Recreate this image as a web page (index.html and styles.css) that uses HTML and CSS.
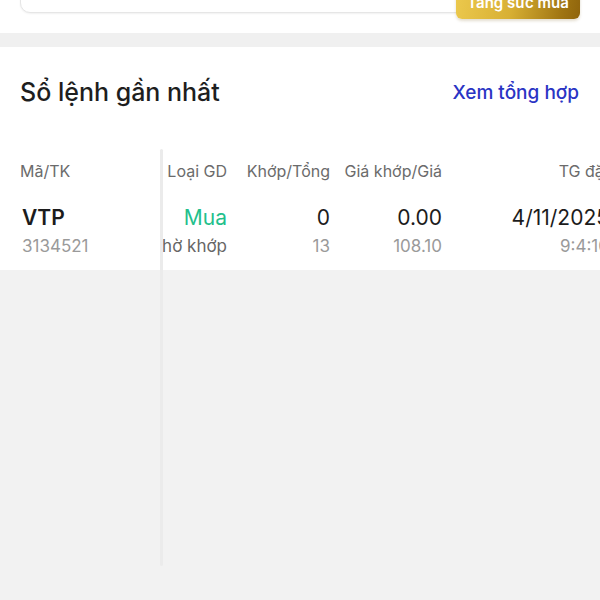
FILE: index.html
```html
<!DOCTYPE html>
<html lang="vi">
<head>
<meta charset="utf-8">
<link rel="stylesheet" href="styles.css">
</head>
<body>
<div class="top">
  <div class="card"></div>
  <div class="boost">Tăng sức mua</div>
</div>
<div class="band"></div>
<section class="panel">
  <div class="panel-head">
    <h2 class="title">Sổ lệnh gần nhất</h2>
    <a class="link">Xem tổng hợp</a>
  </div>
  <div class="table">
    <div class="fixed">
      <div class="th">Mã/TK</div>
      <div class="cell">
        <div class="main sym">VTP</div>
        <div class="sub">3134521</div>
      </div>
    </div>
    <div class="scroll">
      <div class="col w-type">
        <div class="th">Loại GD</div>
        <div class="cell">
          <div class="main buy">Mua</div>
          <div class="sub dark">Chờ khớp</div>
        </div>
      </div>
      <div class="col w-qty">
        <div class="th">Khớp/Tổng</div>
        <div class="cell">
          <div class="main">0</div>
          <div class="sub">13</div>
        </div>
      </div>
      <div class="col w-price">
        <div class="th">Giá khớp/Giá</div>
        <div class="cell">
          <div class="main">0.00</div>
          <div class="sub">108.10</div>
        </div>
      </div>
      <div class="col w-time">
        <div class="th">TG đặt</div>
        <div class="cell">
          <div class="main">4/11/2025</div>
          <div class="sub">9:4:10</div>
        </div>
      </div>
    </div>
  </div>
</section>
</body>
</html>
```
FILE: styles.css
```css
* { box-sizing: border-box; }
html, body { margin: 0; padding: 0; }
body {
  width: 600px;
  height: 600px;
  overflow: hidden;
  background: #f2f2f2;
  font-family: "Inter", "Lato", "Noto Sans", sans-serif;
  color: #1c1c1c;
}
.top {
  position: relative;
  height: 33px;
  background: #fff;
  overflow: hidden;
}
.card {
  margin: -40px 20px 0 20px;
  height: 53px;
  background: #fff;
  border-radius: 10px;
  border: 1px solid #e6e6e6;
  box-shadow: 0 1px 2px rgba(0,0,0,0.06);
}
.boost {
  position: absolute;
  right: 20px;
  top: -14px;
  width: 124px;
  height: 33px;
  border-radius: 6px;
  background: linear-gradient(100deg, #ecc94d 0%, #d8b034 45%, #a07512 85%, #8f640c 100%);
  color: #fff;
  font-weight: 600;
  font-size: 15px;
  display: flex;
  align-items: center;
  justify-content: center;
  box-shadow: 0 2px 3px rgba(120,90,20,0.2);
}
.band { height: 14px; background: #f0f0f0; }
.panel {
  background: #fff;
  height: 223px;
  position: relative;
}
.panel-head {
  display: flex;
  justify-content: space-between;
  align-items: center;
  padding: 30px 21px 0 20px;
}
.title {
  margin: 0;
  font-size: 25px;
  font-weight: 500;
  color: #1e1e1e;
}
.link {
  font-size: 19px;
  font-weight: 500;
  color: #2a34c4;
}
.table {
  display: flex;
  margin-top: 44px;
  position: relative;
}
.table::after {
  content: "";
  position: absolute;
  left: 160px;
  top: -2px;
  width: 3px;
  height: 417px;
  background: #ebebeb;
  border-radius: 2px;
}
.fixed {
  width: 160px;
  flex: none;
  padding-left: 20px;
  background: #fff;
  position: relative;
  z-index: 1;
}
.scroll {
  flex: 1;
  display: flex;
  overflow: hidden;
}
.col {
  flex: none;
  display: flex;
  flex-direction: column;
  align-items: flex-end;
}
.w-type { width: 67px; }
.w-qty { width: 103px; }
.w-price { width: 112px; }
.w-time { width: 167px; }
.th {
  height: 53px;
  padding-top: 10px;
  font-size: 16px;
  color: #6b6b6b;
  white-space: nowrap;
}
.cell {
  display: flex;
  flex-direction: column;
  align-items: flex-end;
  white-space: nowrap;
}
.fixed .cell { align-items: flex-start; }
.main {
  font-size: 21px;
  line-height: 28px;
  height: 28px;
  color: #1c1c1c;
}
.sym { font-weight: 600; padding-left: 2px; }
.buy { color: #23bf8c; }
.sub {
  font-size: 17px;
  line-height: 28px;
  color: #9a9a9a;
}
.fixed .sub { padding-left: 2px; }
.sub.dark { color: #666; }
```
